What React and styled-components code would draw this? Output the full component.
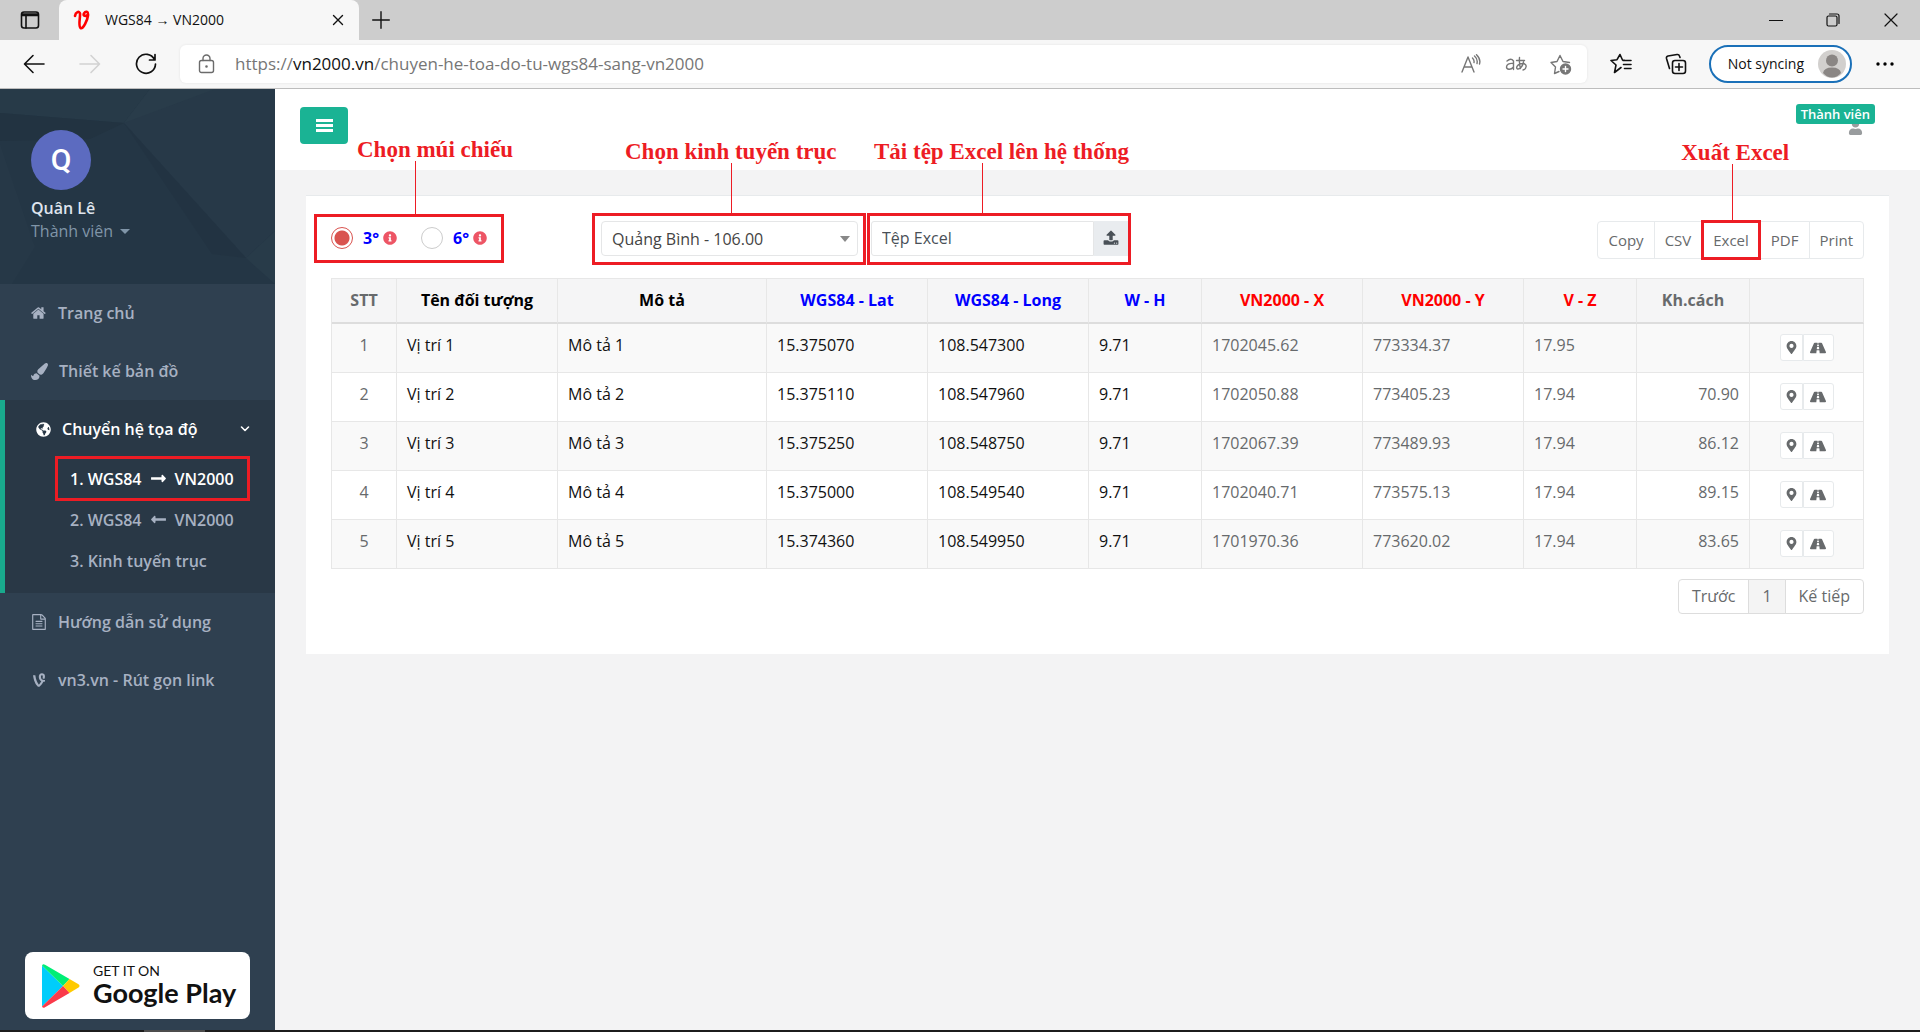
import React, { useState } from "react";
import styled, { createGlobalStyle } from "styled-components";
import {
  FaPaintBrush,
  FaGlobeAmericas,
  FaVine,
  FaInfoCircle,
  FaMapMarkerAlt,
  FaRoad,
  FaUser,
  FaLongArrowAltRight,
  FaLongArrowAltLeft,
} from "react-icons/fa";

const RED = "#ed1c24";
const TEAL = "#1ab394";

const GlobalStyle = createGlobalStyle`
  * { box-sizing: border-box; }
  body { margin: 0; background: #f3f3f4; font-family: "Open Sans", "Noto Sans", sans-serif; font-size: 16px; line-height: 22px; color: #676a6c; }
  button, input, select { font: inherit; color: inherit; margin: 0; }
  button { cursor: pointer; padding: 0; border: 0; background: none; }
  a { color: inherit; text-decoration: none; }
`;

/* ---------- Browser window ---------- */

const Window = styled.div`
  min-height: 100vh;
  display: flex;
  flex-direction: column;
`;

const TabStrip = styled.div`
  height: 40px;
  display: flex;
  align-items: stretch;
  background: #cdcdcd;
  color: #111;
`;

const ChromeButton = styled.button`
  width: ${(p) => p.$w || 56}px;
  display: flex;
  align-items: center;
  justify-content: center;
  color: ${(p) => p.$color || "#111"};
  flex: none;
`;

const Tab = styled.div`
  width: 300px;
  display: flex;
  align-items: center;
  padding-left: 14px;
  background: #f7f7f7;
  border-radius: 8px 8px 0 0;
  font-size: 14px;
`;

const Favicon = styled.span`
  width: 32px;
  display: flex;
`;

const TabTitle = styled.span`
  flex: 1;
  white-space: nowrap;
`;

const WindowButtons = styled.div`
  margin-left: auto;
  display: flex;
`;

const Toolbar = styled.div`
  height: 49px;
  display: flex;
  align-items: center;
  padding: 0 9px 1px 6px;
  background: #f7f7f7;
  border-bottom: 1px solid #bdbdbd;
`;

const AddressBar = styled.div`
  flex: 1;
  height: 38px;
  display: flex;
  align-items: center;
  margin: 0 7px 0 6px;
  padding: 0 3px 0 5px;
  background: #fff;
  border-radius: 6px;
  box-shadow: 0 0 3px rgba(0, 0, 0, 0.08);
`;

const Url = styled.div`
  flex: 1;
  padding-left: 6px;
  font-size: 17px;
  color: #767676;
  white-space: nowrap;
  b { font-weight: 400; color: #111; }
`;

const Profile = styled.button`
  height: 38px;
  display: flex;
  align-items: center;
  gap: 14px;
  margin: 0 7px 0 5px;
  padding: 0 4px 0 17px;
  background: #fff;
  border: 2px solid #1a70b8;
  border-radius: 19px;
  color: #111;
  font-size: 14px;
  white-space: nowrap;
`;

const Taskbar = styled.div`
  height: 2px;
  padding-left: 144px;
  background: #1c1c1c;
  &::before { content: ""; display: block; width: 61px; height: 2px; background: #4c4c4c; }
`;

/* ---------- Page frame ---------- */

const Page = styled.div`
  flex: 1;
  display: flex;
`;

const Sidebar = styled.aside`
  width: 275px;
  flex: none;
  display: flex;
  flex-direction: column;
  background: #2f4050;
  color: #a7b1c2;
`;

const ProfileHeader = styled.div`
  position: relative;
  height: 195px;
  padding: 41px 31px 0;
  background: #243645;
`;

const Facets = styled.svg`
  position: absolute;
  inset: 0;
  width: 100%;
  height: 100%;
`;

const ProfileInfo = styled.div`
  position: relative;
  display: flex;
  flex-direction: column;
  align-items: flex-start;
`;

const Avatar = styled.div`
  width: 60px;
  height: 60px;
  display: grid;
  place-items: center;
  margin-bottom: 6px;
  border-radius: 50%;
  background: #5c6bc0;
  color: #fff;
  font: 500 30px/60px Roboto, sans-serif;
`;

const UserName = styled.strong`
  color: #dfe4ed;
  font-weight: 600;
  line-height: 24px;
`;

const RoleButton = styled.button`
  display: flex;
  align-items: center;
  gap: 7px;
  color: #8095a8;
  &::after { content: ""; border: 5px solid transparent; border-top-color: currentColor; border-bottom: 0; }
`;

const Menu = styled.ul`
  list-style: none;
  margin: 0;
  padding: 0;
  font-weight: 600;
`;

const MenuItem = styled.li`
  ${(p) => p.$active && `
    background: #293846;
    border-left: 5px solid #19aa8d;
    color: #fff;
    padding-bottom: 12px;
  `}
`;

const MenuLink = styled.a`
  height: 58px;
  display: flex;
  align-items: center;
  gap: 11px;
  padding: 0 25px 0 31px;
  svg:last-child:not(:first-child) { margin-left: auto; }
`;

const SubMenu = styled.ul`
  list-style: none;
  margin: 0;
  padding: 0 25px 0 50px;
`;

const SubLink = styled.a`
  position: relative;
  height: 41px;
  display: flex;
  align-items: center;
  gap: 8px;
  padding-left: 15px;
  color: ${(p) => (p.$active ? "#fff" : "#a7b1c2")};
  white-space: nowrap;
`;

const PlayBadge = styled.a`
  height: 67px;
  display: flex;
  align-items: center;
  gap: 13px;
  margin: auto 25px 11px;
  padding-left: 16px;
  background: #fff;
  border-radius: 8px;
  color: #111;
`;

const PlayText = styled.span`
  display: flex;
  flex-direction: column;
  font-family: Lato, sans-serif;
  white-space: nowrap;
  small { font-size: 14px; line-height: 14px; }
  span { font-size: 27px; line-height: 30px; font-weight: 700; }
`;

const Main = styled.main`
  flex: 1;
  min-width: 0;
  background: #f3f3f4;
`;

const TopBar = styled.header`
  height: 81px;
  display: flex;
  justify-content: space-between;
  align-items: flex-start;
  padding: 18px 57px 0 25px;
  background: #fff;
`;

const MenuToggle = styled.button`
  width: 48px;
  height: 37px;
  display: grid;
  place-items: center;
  border-radius: 4px;
  background: ${TEAL};
  color: #fff;
`;

const Account = styled.button`
  position: relative;
  height: 28px;
  display: flex;
  align-items: flex-end;
  color: #999c9e;
`;

const AccountBadge = styled.span`
  position: absolute;
  right: -12px;
  top: -3px;
  padding: 0 5px;
  border-radius: 3px;
  background: ${TEAL};
  color: #fff;
  font-size: 13px;
  font-weight: 600;
  line-height: 20px;
  white-space: nowrap;
`;

/* ---------- Panel ---------- */

const Panel = styled.section`
  margin: 25px 31px;
  padding: 25px 25px 40px;
  background: #fff;
  border-top: 1px solid #e7eaec;
`;

const Controls = styled.div`
  height: 57px;
  display: grid;
  grid-template-columns: 270px 270px 1fr auto;
  align-items: start;
`;

const Target = styled.div`
  position: relative;
  height: 34px;
  width: ${(p) => p.$w}px;
  display: flex;
  align-items: center;
`;

const Radio = styled.label`
  display: flex;
  flex: none;
  align-items: center;
  width: 90px;
  color: #00f;
  font-weight: 700;
  &:last-of-type { width: auto; }
  input {
    appearance: none;
    width: 22px;
    height: 22px;
    margin-right: 10px;
    border: 1px solid #ccc;
    border-radius: 50%;
    background: #fff;
  }
  input:checked {
    border-color: #d9534f;
    background: radial-gradient(circle, #d9534f 7px, #fff 8px);
  }
  svg { color: #ed5565; margin-left: 4px; }
`;

const Select = styled.select`
  appearance: none;
  width: 100%;
  height: 35px;
  padding: 2px 10px 0;
  border: 1px solid #e5e6e7;
  border-radius: 4px;
  background: #fff;
  color: #444;
`;

const Caret = styled.span`
  position: absolute;
  right: 8px;
  top: 15px;
  border: 5px solid transparent;
  border-top: 6px solid #888;
  border-bottom: 0;
  pointer-events: none;
`;

const FileName = styled.input`
  flex: 1;
  min-width: 0;
  height: 35px;
  padding: 0 10px;
  border: 1px solid #e5e6e7;
  border-radius: 3px 0 0 3px;
  color: #495057;
`;

const UploadButton = styled.button`
  width: 34px;
  height: 35px;
  display: grid;
  place-items: center;
  background: #e9ecef;
  color: #495057;
`;

const ExportGroup = styled.div`
  display: flex;
  font-size: 15px;
`;

const ExportButton = styled.button`
  position: relative;
  height: 38px;
  padding: 0 10px;
  border: 1px solid #e7eaec;
  margin-left: -1px;
  background: #fff;
  &:nth-child(3) { padding: 0 11px; }
  &:first-child { border-radius: 4px 0 0 4px; }
  &:last-child { border-radius: 0 4px 4px 0; }
`;

/* Callouts: red frame, leader line and caption drawn over the controls */

const Frame = styled.span`
  position: absolute;
  z-index: 1;
  top: ${(p) => p.$t}px;
  right: ${(p) => p.$r}px;
  bottom: ${(p) => p.$b}px;
  left: ${(p) => p.$l}px;
  border: 3px solid ${RED};
  pointer-events: none;
`;

const Leader = styled.span`
  position: absolute;
  left: ${(p) => p.$x}px;
  bottom: 100%;
  width: 1px;
  height: ${(p) => p.$h}px;
  background: ${RED};
`;

const Caption = styled.span`
  position: absolute;
  left: ${(p) => p.$x}px;
  bottom: calc(100% + ${(p) => p.$h - 2}px);
  color: ${RED};
  font: 700 23px/27px "Liberation Serif", serif;
  white-space: nowrap;
`;

const Callout = ({ inset, leader, caption, height, children }) => (
  <Frame $t={inset[0]} $r={inset[1]} $b={inset[2]} $l={inset[3]}>
    <Leader $x={leader} $h={height} />
    <Caption $x={caption} $h={height}>{children}</Caption>
  </Frame>
);

/* ---------- Table ---------- */

const Table = styled.table`
  width: 100%;
  table-layout: fixed;
  border-collapse: separate;
  border-spacing: 0;
  border: 1px solid #e7e7e7;
  border-width: 1px 0 0 1px;
`;

const Th = styled.th`
  height: 45px;
  padding: 0 8px 2px;
  background: #f5f5f6;
  border-right: 1px solid #e7e7e7;
  border-bottom: 2px solid #ddd;
  color: ${(p) => p.$color};
  font-weight: 700;
  white-space: nowrap;
`;

const Row = styled.tr`
  background: #fff;
  &:nth-child(odd) { background: #f9f9f9; }
`;

const Td = styled.td`
  height: 49px;
  padding: 10px 10px 0;
  border-right: 1px solid #e7e7e7;
  border-bottom: 1px solid #e7e7e7;
  color: ${(p) => p.$color || "#676a6c"};
  text-align: ${(p) => p.$align || "left"};
  vertical-align: top;
  white-space: nowrap;
`;

const RowActions = styled.div`
  display: flex;
  justify-content: center;
  button {
    width: 23px;
    height: 27px;
    display: grid;
    place-items: center;
    background: #fff;
    border: 1px solid #e7eaec;
    border-radius: 3px 0 0 3px;
  }
  button + button { width: 31px; border-radius: 0 3px 3px 0; }
`;

const Pagination = styled.nav`
  display: flex;
  justify-content: flex-end;
  margin-top: 10px;
  button {
    height: 35px;
    padding: 0 13px 2px;
    margin-left: -1px;
    border: 1px solid #ddd;
    background: #fff;
  }
  button:first-child { border-radius: 4px 0 0 4px; }
  button:last-child { border-radius: 0 4px 4px 0; }
  button[aria-current] { background: #f4f4f4; }
`;

/* ---------- Icons ---------- */

const Line = ({ w = 20, h = w, box = `0 0 ${w} ${h}`, sw = 1.4, children }) => (
  <svg width={w} height={h} viewBox={box} fill="none" stroke="currentColor" strokeWidth={sw} strokeLinecap="round" strokeLinejoin="round" aria-hidden="true">
    {children}
  </svg>
);

const Glyph = ({ size = 16, d }) => (
  <svg width={size} height={size} viewBox="0 0 1792 1792" fill="currentColor" aria-hidden="true"><path d={d} /></svg>
);

const HOME = "M1408 992v480q0 26-19 45t-45 19h-384v-384h-256v384h-384q-26 0-45-19t-19-45v-480q0-1 .5-3t.5-3l575-474 575 474q1 2 1 6zm223-69l-62 74q-8 9-21 11h-3q-13 0-21-7l-692-577-692 577q-12 8-24 7-13-2-21-11l-62-74q-8-10-7-23.5t11-21.5l719-599q32-26 76-26t76 26l244 204v-195q0-14 9-23t23-9h192q14 0 23 9t9 23v408l219 182q10 8 11 21.5t-7 23.5z";
const UPLOAD = "M1344 1472q0-26-19-45t-45-19-45 19-19 45 19 45 45 19 45-19 19-45zm256 0q0-26-19-45t-45-19-45 19-19 45 19 45 45 19 45-19 19-45zm128-224v320q0 40-28 68t-68 28h-1472q-40 0-68-28t-28-68v-320q0-40 28-68t68-28h427q21 56 70.5 92t110.5 36h256q61 0 110.5-36t70.5-92h427q40 0 68 28t28 68zm-325-648q-17 40-59 40h-256v448q0 26-19 45t-45 19h-256q-26 0-45-19t-19-45v-448h-256q-42 0-59-40-17-39 14-69l448-448q18-19 45-19t45 19l448 448q31 30 14 69z";
const FILE_TEXT = "M1596 380q28 28 48 76t20 88v1152q0 40-28 68t-68 28h-1344q-40 0-68-28t-28-68v-1600q0-40 28-68t68-28h896q40 0 88 20t76 48zm-444-244v376h376q-10-29-22-41l-313-313q-12-12-41-22zm384 1528v-1024h-416q-40 0-68-28t-28-68v-416h-768v1536h1280zm-1024-864q0-14 9-23t23-9h704q14 0 23 9t9 23v64q0 14-9 23t-23 9h-704q-14 0-23-9t-9-23v-64zm736 224q14 0 23 9t9 23v64q0 14-9 23t-23 9h-704q-14 0-23-9t-9-23v-64q0-14 9-23t23-9h704zm0 256q14 0 23 9t9 23v64q0 14-9 23t-23 9h-704q-14 0-23-9t-9-23v-64q0-14 9-23t23-9h704z";

const PlayLogo = () => (
  <svg width="39" height="44" viewBox="0 0 39 44" aria-hidden="true">
    <path d="M1 1.5v41L22 22z" fill="#00cdfb" />
    <path d="M1 1.5Q2-.5 4 .8L28.500 15 22 22z" fill="#00ee76" />
    <path d="M28.500 15 37.500 20.300Q39.500 22 37.500 23.500L28.500 29 22 22z" fill="#ffca00" />
    <path d="M1 42.500Q2 44.500 4 43.200L28.500 29 22 22z" fill="#fa3a4a" />
  </svg>
);

/* ---------- Data ---------- */

const COLUMNS = [
  { label: "STT", width: 65, head: "#676a6c", align: "center" },
  { label: "Tên đối tượng", width: 161, head: "#000", cell: "#111" },
  { label: "Mô tả", width: 209, head: "#000", cell: "#111" },
  { label: "WGS84 - Lat", width: 161, head: "#00f", cell: "#111" },
  { label: "WGS84 - Long", width: 161, head: "#00f", cell: "#111" },
  { label: "W - H", width: 113, head: "#00f", cell: "#111" },
  { label: "VN2000 - X", width: 161, head: "#f00" },
  { label: "VN2000 - Y", width: 161, head: "#f00" },
  { label: "V - Z", width: 113, head: "#f00" },
  { label: "Kh.cách", width: 113, head: "#676a6c", align: "right" },
  { label: "", width: 114, head: "#676a6c" },
];
const TOTAL = COLUMNS.reduce((sum, c) => sum + c.width, 0);

const ROWS = [
  ["1", "Vị trí 1", "Mô tả 1", "15.375070", "108.547300", "9.71", "1702045.62", "773334.37", "17.95", ""],
  ["2", "Vị trí 2", "Mô tả 2", "15.375110", "108.547960", "9.71", "1702050.88", "773405.23", "17.94", "70.90"],
  ["3", "Vị trí 3", "Mô tả 3", "15.375250", "108.548750", "9.71", "1702067.39", "773489.93", "17.94", "86.12"],
  ["4", "Vị trí 4", "Mô tả 4", "15.375000", "108.549540", "9.71", "1702040.71", "773575.13", "17.94", "89.15"],
  ["5", "Vị trí 5", "Mô tả 5", "15.374360", "108.549950", "9.71", "1701970.36", "773620.02", "17.94", "83.65"],
];

const BrowserChrome = () => (
  <>
    <TabStrip>
      <ChromeButton $w={59} aria-label="Tab actions">
        <Line w={20} sw={1.6}><rect x="1.500" y="2" width="17" height="16" rx="2.500" /><path d="M2 4h16M2 5.500h16M6 6v12" /></Line>
      </ChromeButton>
      <Tab>
        <Favicon>
          <Line w={18} h={20} sw={2.6}><g stroke="#f00"><path d="M2 6C2.500 2 6.500 .5 7 3.500S5 16 7.500 18 14.500 10 15 5.500 12.500 .8 11 3.500 13 6.500 14.500 5" /></g></Line>
        </Favicon>
        <TabTitle>WGS84 → VN2000</TabTitle>
        <ChromeButton $w={42} aria-label="Close tab"><Line w={12}><path d="M1.500 1.500l9 9M10.500 1.500l-9 9" /></Line></ChromeButton>
      </Tab>
      <ChromeButton $w={44} aria-label="New tab"><Line w={18}><path d="M9 .7v16.600M.7 9h16.600" /></Line></ChromeButton>
      <WindowButtons>
        <ChromeButton aria-label="Minimize"><Line w={14} sw={1.200}><path d="M.5 7.500h13" /></Line></ChromeButton>
        <ChromeButton $w={58} aria-label="Restore"><Line w={14} sw={1.200}><rect x="1" y="3" width="10" height="10" rx="1.500" /><path d="M3.500 1H11q2 0 2 2v7.500" /></Line></ChromeButton>
        <ChromeButton $w={58} aria-label="Close"><Line w={14} sw={1.200}><path d="M1 1l12 12M13 1L1 13" /></Line></ChromeButton>
      </WindowButtons>
    </TabStrip>
    <Toolbar>
      <ChromeButton aria-label="Back"><Line w={22} sw={1.600}><path d="M21 11H2M10 2.500L1.500 11l8.500 8.500" /></Line></ChromeButton>
      <ChromeButton $color="#d2d2d2" aria-label="Forward"><Line w={22} sw={1.600}><path d="M1 11h19M12 2.500l8.500 8.500-8.500 8.500" /></Line></ChromeButton>
      <ChromeButton aria-label="Refresh"><Line w={22} sw={1.700}><path d="M19.500 6.500A9.500 9.500 0 1 0 20.500 11M20 1.500V7h-5.500" /></Line></ChromeButton>
      <AddressBar>
        <ChromeButton $w={44} $color="#6b6b6b" aria-label="Site information">
          <Line w={18} h={20}><rect x="1.500" y="6.500" width="14" height="12" rx="2" /><path d="M5 6.500V4.500a3.500 3.500 0 0 1 7 0v2" /><circle cx="8.500" cy="12.500" r=".6" fill="currentColor" /></Line>
        </ChromeButton>
        <Url role="textbox" tabIndex={0} aria-label="Address">https://<b>vn2000.vn</b>/chuyen-he-toa-do-tu-wgs84-sang-vn2000</Url>
        <ChromeButton $w={45} $color="#767676" aria-label="Read aloud">
          <Line w={20}><path d="M1 18L7 3l6 15M3 13h8M11.500 4q2 2 1.500 4.500M13.500 2q3.500 3 2.500 7.500M15.500.7q4.500 4.300 3 9.300" /></Line>
        </ChromeButton>
        <ChromeButton $w={45} $color="#767676" aria-label="Translate">
          <Line w={22} h={16}><path d="M2 5q4-3.500 6.500 0v8.500M8.500 7.500C4 7 1.500 8.500 1.500 11s4 3.500 7 0M11.500 4.500h8M14.500 1.500q-.5 6 1 11M18.500 6c-1 5-4 7.500-6 7s-.5-5.500 5-5.500 4 6 .5 6.500" /></Line>
        </ChromeButton>
        <ChromeButton $w={45} $color="#767676" aria-label="Add to favorites">
          <Line w={22}><path d="M9 18.500l-4.500 2 1-6.500-4.500-4.500 6-1L10 2.500l3 6 6.500 1" /><circle cx="15.500" cy="16" r="5" fill="currentColor" /><path d="M15.500 13.500v5M13 16h5" stroke="#fff" /></Line>
        </ChromeButton>
      </AddressBar>
      <ChromeButton $w={55} aria-label="Favorites"><Line w={22} sw={1.600}><path d="M11 14.500l-6.500 5 1.500-7.500L1 7.500l6-.8L10 1.500l2.500 5.500 2 .3M13 7.500h8M13.500 11.500H21M14.500 15.500H21" /></Line></ChromeButton>
      <ChromeButton $w={55} aria-label="Collections"><Line w={22} sw={1.600}><rect x="7.500" y="7.500" width="13" height="13" rx="2.500" /><path d="M14 10.500v7M10.500 14h7M4.500 15.500L1.500 5.500q-.5-2 1.500-2.500L12 1.500q2-.3 2.500 1.500l.5 1.500" /></Line></ChromeButton>
      <Profile>
        Not syncing
        <svg width="28" height="28" viewBox="0 0 28 28" aria-hidden="true"><circle cx="14" cy="14" r="14" fill="#d2d0ce" /><circle cx="14" cy="10.500" r="6" fill="#8a8684" /><path d="M5 23q1-5.500 9-5.500t9 5.500q-4 4.500-9 4.500T5 23z" fill="#8a8684" /></svg>
      </Profile>
      <ChromeButton $w={52} aria-label="Settings and more">
        <svg width="18" height="4" viewBox="0 0 18 4" aria-hidden="true"><circle cx="2" cy="2" r="1.700" /><circle cx="9" cy="2" r="1.700" /><circle cx="16" cy="2" r="1.700" /></svg>
      </ChromeButton>
    </Toolbar>
  </>
);

const SideNav = () => (
  <Sidebar>
    <ProfileHeader>
      <Facets viewBox="0 0 275 195" preserveAspectRatio="none" aria-hidden="true">
        <path d="M0 0h150L124 34 0 24z" fill="#273a48" />
        <path d="M150 0h125v142l-29 27L124 34z" fill="#273948" />
        <path d="M124 34L215 0H150z" fill="#293c4a" />
        <path d="M0 24l124 10L90 50 0 52z" fill="#223341" />
        <path d="M124 34l122 135-34-4z" fill="#223342" />
        <path d="M246 169l29-27v53z" fill="#283b49" />
        <path d="M0 55l35 103L12 195H0z" fill="#263847" />
      </Facets>
      <ProfileInfo>
        <Avatar>Q</Avatar>
        <UserName>Quân Lê</UserName>
        <RoleButton>Thành viên</RoleButton>
      </ProfileInfo>
    </ProfileHeader>
    <Menu>
      <MenuItem><MenuLink href="#"><Glyph d={HOME} />Trang chủ</MenuLink></MenuItem>
      <MenuItem><MenuLink href="#"><FaPaintBrush size={17} />Thiết kế bản đồ</MenuLink></MenuItem>
      <MenuItem $active>
        <MenuLink href="#"><FaGlobeAmericas size={15} />Chuyển hệ tọa độ<Line w={10} sw={1.600}><path d="M1.500 3L5 6.500 8.500 3" /></Line></MenuLink>
        <SubMenu>
          <li>
            <SubLink href="#" $active>
              1. WGS84 <FaLongArrowAltRight size={17} /> VN2000
              <Frame $t={-2} $r={0} $b={-2} $l={0} />
            </SubLink>
          </li>
          <li><SubLink href="#">2. WGS84 <FaLongArrowAltLeft size={17} /> VN2000</SubLink></li>
          <li><SubLink href="#">3. Kinh tuyến trục</SubLink></li>
        </SubMenu>
      </MenuItem>
      <MenuItem><MenuLink href="#"><Glyph d={FILE_TEXT} />Hướng dẫn sử dụng</MenuLink></MenuItem>
      <MenuItem><MenuLink href="#"><FaVine />vn3.vn - Rút gọn link</MenuLink></MenuItem>
    </Menu>
    <PlayBadge href="#">
      <PlayLogo />
      <PlayText><small>GET IT ON</small><span>Google Play</span></PlayText>
    </PlayBadge>
  </Sidebar>
);

export default function App() {
  const [zone, setZone] = useState("3");
  return (
    <Window>
      <GlobalStyle />
      <BrowserChrome />
      <Page>
        <SideNav />
        <Main>
          <TopBar>
            <MenuToggle aria-label="Menu">
              <svg width="17" height="13" viewBox="0 0 17 13" fill="currentColor" aria-hidden="true"><path d="M0 0h17v3H0zM0 5h17v3H0zM0 10h17v3H0z" /></svg>
            </MenuToggle>
            <Account><FaUser size={15} /><AccountBadge>Thành viên</AccountBadge></Account>
          </TopBar>
          <Panel>
            <Controls>
              <Target $w={156}>
                {["3", "6"].map((z) => (
                  <Radio key={z}>
                    <input type="radio" name="zone" checked={zone === z} onChange={() => setZone(z)} />
                    {z}°<FaInfoCircle size={14} />
                  </Radio>
                ))}
                <Callout inset={[-7, -17, -8, -17]} leader={98} caption={40} height={56}>Chọn múi chiếu</Callout>
              </Target>
              <Target $w={257}>
                <Select aria-label="Kinh tuyến trục"><option>Quảng Bình - 106.00</option></Select>
                <Caret />
                <Callout inset={[-8, -8, -10, -9]} leader={136} caption={30} height={53}>Chọn kinh tuyến trục</Callout>
              </Target>
              <Target $w={257}>
                <FileName aria-label="Tệp Excel" defaultValue="Tệp Excel" />
                <UploadButton aria-label="Tải lên"><Glyph d={UPLOAD} /></UploadButton>
                <Callout inset={[-8, -3, -10, -4]} leader={112} caption={4} height={53}>Tải tệp Excel lên hệ thống</Callout>
              </Target>
              <ExportGroup>
                <ExportButton>Copy</ExportButton>
                <ExportButton>CSV</ExportButton>
                <ExportButton>
                  Excel
                  <Callout inset={[-2, -1, -2, -1]} leader={28} caption={-23} height={59}>Xuất Excel</Callout>
                </ExportButton>
                <ExportButton>PDF</ExportButton>
                <ExportButton>Print</ExportButton>
              </ExportGroup>
            </Controls>
            <Table>
              <colgroup>{COLUMNS.map((c, i) => <col key={i} style={{ width: `${(c.width / TOTAL) * 100}%` }} />)}</colgroup>
              <thead><tr>{COLUMNS.map((c, i) => <Th key={i} $color={c.head}>{c.label}</Th>)}</tr></thead>
              <tbody>
                {ROWS.map((row) => (
                  <Row key={row[0]}>
                    {row.map((v, i) => <Td key={i} $color={COLUMNS[i].cell} $align={COLUMNS[i].align}>{v}</Td>)}
                    <Td>
                      <RowActions>
                        <button aria-label="Xem vị trí"><FaMapMarkerAlt size={13} /></button>
                        <button aria-label="Chỉ đường"><FaRoad size={16} /></button>
                      </RowActions>
                    </Td>
                  </Row>
                ))}
              </tbody>
            </Table>
            <Pagination aria-label="Phân trang">
              <button>Trước</button>
              <button aria-current="page">1</button>
              <button>Kế tiếp</button>
            </Pagination>
          </Panel>
        </Main>
      </Page>
      <Taskbar />
    </Window>
  );
}
